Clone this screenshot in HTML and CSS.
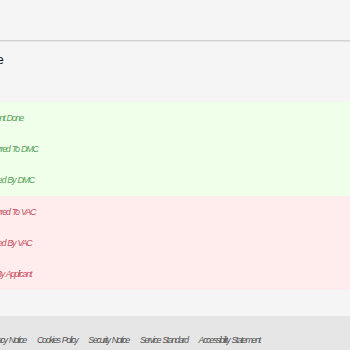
FILE: index.html
```html
<!DOCTYPE html>
<html>
<head>
<meta charset="utf-8">
<link rel="stylesheet" href="styles.css">
</head>
<body>
<div class="page">
  <header class="topbar"></header>
  <main class="content">
    <h1 class="title">Legende</h1>
    <div class="legend">
      <div class="row ok"><span>Payment Done</span></div>
      <div class="row ok"><span>Transferred To DMC</span></div>
      <div class="row ok"><span>Received By DMC</span></div>
      <div class="row bad"><span>Transferred To VAC</span></div>
      <div class="row bad"><span>Received By VAC</span></div>
      <div class="row bad"><span class="long">Collected By Applicant</span></div>
    </div>
  </main>
  <footer class="footer">
    <a>Privacy Notice</a>
    <a>Cookies Policy</a>
    <a>Security Notice</a>
    <a>Service Standard</a>
    <a>Accessibility Statement</a>
  </footer>
</div>
</body>
</html>
```
FILE: styles.css
```css
html, body {
  margin: 0;
  padding: 0;
  background: #f5f5f5;
  font-family: "Liberation Sans", Arial, sans-serif;
  overflow: hidden;
}
.page {
  width: 350px;
  height: 350px;
  display: flex;
  flex-direction: column;
  overflow: hidden;
}
.topbar {
  height: 40px;
  border-bottom: 1px solid #d2d2d2;
  box-shadow: 0 1px 0 #e6e6e6;
  flex: none;
}
.content {
  flex: none;
  padding-top: 12px;
}
.title {
  margin: 0 0 0 -43px;
  font-size: 12px;
  font-weight: normal;
  color: #111;
  height: 49px;
  line-height: 14px;
}
.legend {
  display: flex;
  flex-direction: column;
}
.row {
  height: 31.3px;
  display: flex;
  align-items: center;
}
.row span {
  margin-left: -22px;
  font-size: 9px;
  font-style: italic;
  letter-spacing: -1.3px;
  word-spacing: 1px;
  white-space: nowrap;
}
.row span.long {
  margin-left: -32px;
}
.ok {
  background: #efffe9;
}
.ok span {
  color: #5aa05a;
}
.bad {
  background: #ffeded;
}
.bad span {
  color: #c8505f;
}
.footer {
  margin-top: auto;
  height: 34px;
  background: #e6e6e6;
  display: flex;
  align-items: center;
  gap: 11px;
  padding-top: 14px;
  box-sizing: border-box;
}
.footer a {
  font-size: 9px;
  font-style: italic;
  letter-spacing: -1.4px;
  word-spacing: 1px;
  color: #555;
  white-space: nowrap;
}
.footer a:first-child {
  margin-left: -13px;
}
```
